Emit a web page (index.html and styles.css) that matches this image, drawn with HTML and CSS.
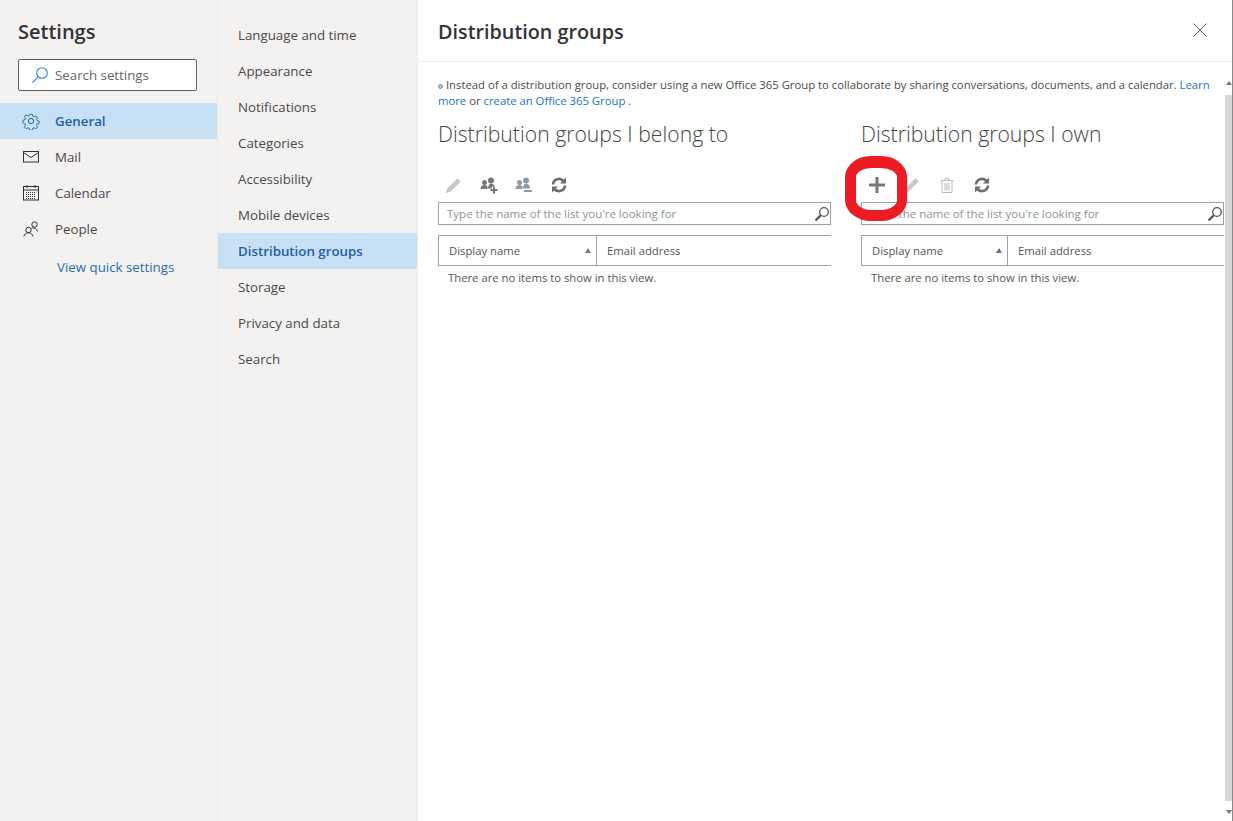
FILE: index.html
```html
<!doctype html>
<html lang="en">
  <head>
    <meta charset="UTF-8" />
    <meta name="viewport" content="width=device-width, initial-scale=1.0" />
    <title>Settings</title>
    <link rel="stylesheet" href="styles.css">
  </head>
  <body>
    <div class="sidebar">
      <div class="sidebar-title">Settings</div>
      <div class="search-settings">
        <svg width="18" height="18" viewBox="0 0 18 18" fill="none" stroke="#2b88d8" stroke-width="1.1"><circle cx="11" cy="7" r="5.3"/><path d="M7.2 10.8 1.5 16.5"/></svg>
        <span>Search settings</span>
      </div>
      <div class="side-item active">
        <svg width="18" height="18" viewBox="0 0 18 18" fill="none" stroke="#1f5fa8" stroke-width="1"><circle cx="9" cy="9" r="2.6"/><path d="M7.6 1.5h2.8l.5 2.2 1.5.7 2-1.1 1.9 2-1.1 1.9.6 1.5 2.2.5v0l0 2.6-2.2.5-.6 1.5 1.1 1.9-1.9 1.9-2-1.1-1.5.7-.5 2.1H7.600l-.5-2.100-1.500-.7-2 1.100-1.900-1.900 1.100-1.900-.6-1.500L0 10.800V8.200l2.200-.5.6-1.500-1.100-1.900 1.900-2 2 1.100 1.500-.7z" transform="translate(.9 .9) scale(.9)"/></svg>
        <span>General</span>
      </div>
      <div class="side-item">
        <svg width="18" height="18" viewBox="0 0 18 18" fill="none" stroke="#333" stroke-width="1"><rect x="1.500" y="3.500" width="15" height="10.500"/><path d="M1.500 4.500 9 9.500l7.500-5"/></svg>
        <span>Mail</span>
      </div>
      <div class="side-item">
        <svg width="18" height="18" viewBox="0 0 18 18" fill="none" stroke="#333" stroke-width="1"><rect x="1.500" y="2.500" width="15" height="13.500"/><path d="M1.500 6h15M5 1v3M13 1v3"/><path d="M4 8.500h10M4 10.500h10M4 12.500h10M4 14.500h10" stroke-dasharray="1 1"/></svg>
        <span>Calendar</span>
      </div>
      <div class="side-item">
        <svg width="18" height="18" viewBox="0 0 18 18" fill="none" stroke="#333" stroke-width="1"><circle cx="6.500" cy="10" r="2.700"/><path d="M2 16.500c0-2 2-3.800 4.500-3.800s4 1.800 4.500 3.800"/><circle cx="12.500" cy="4.500" r="2.700"/><path d="M9.500 8c2.500-.6 5.500.8 6 3.500"/></svg>
        <span>People</span>
      </div>
      <a class="quick-link">View quick settings</a>
    </div>

    <div class="subnav">
      <div class="sub-item">Language and time</div>
      <div class="sub-item">Appearance</div>
      <div class="sub-item">Notifications</div>
      <div class="sub-item">Categories</div>
      <div class="sub-item">Accessibility</div>
      <div class="sub-item">Mobile devices</div>
      <div class="sub-item active">Distribution groups</div>
      <div class="sub-item">Storage</div>
      <div class="sub-item">Privacy and data</div>
      <div class="sub-item">Search</div>
    </div>

    <div class="pane">
      <div class="pane-header">
        <div class="pane-title">Distribution groups</div>
        <svg class="close-icon" width="14" height="14" viewBox="0 0 14 14" fill="none" stroke="#555" stroke-width="1"><path d="M.5.5l13 13M13.500.500l-13 13"/></svg>
      </div>
      <div class="pane-body">
        <p class="notice"><span class="notice-dot"></span> Instead of a distribution group, consider using a new Office 365 Group to collaborate by sharing conversations, documents, and a calendar. <a>Learn</a> <a>more</a> or <a>create an Office 365 Group</a> .</p>
        <div class="columns">
          <section class="group-col">
            <h2>Distribution groups I belong to</h2>
            <div class="toolbar">
              <svg class="tool" width="18" height="18" viewBox="0 0 18 18"><path d="M1 17l1.200-4.500L12.500 2.200l3.300 3.300L5.500 15.800z" fill="#c8c8c8"/></svg>
              <svg class="tool" width="18" height="18" viewBox="0 0 18 18" fill="#777"><circle cx="11" cy="4.500" r="3"/><circle cx="4.500" cy="6.500" r="2.500"/><path d="M.5 13c0-2.500 1.500-4 4-4s3 1 3 2v2zM8 12.500c0-3 1-4.700 3-4.700s3.500 1 3.500 2.700H12v2z"/><path d="M13 10.500h2v2.500h2.500v2H15v2.500h-2V15h-2.500v-2H13z"/></svg>
              <svg class="tool" width="18" height="18" viewBox="0 0 18 18" fill="#8f9ba3"><circle cx="11" cy="4.500" r="3"/><circle cx="4.500" cy="6.500" r="2.500"/><path d="M.5 13c0-2.500 1.500-4 4-4s3 1 3 2v2zM8 12.500c0-3 1-4.700 3-4.700s4 1 4 4.700z"/><path d="M9 14h8v2H9z"/></svg>
              <svg class="tool" width="18" height="18" viewBox="0 0 18 18" fill="none" stroke="#6d6d6d" stroke-width="2.700"><path d="M3 8.500a6 6 0 0 1 10.500-3.500"/><path d="M15 9.500a6 6 0 0 1-10.500 3.500"/><path d="M16 1.500v6h-6zM2 16.500v-6h6z" fill="#6d6d6d" stroke="none"/></svg>
            </div>
            <div class="list-search">
              <span>Type the name of the list you're looking for</span>
              <svg width="16" height="16" viewBox="0 0 16 16" fill="none" stroke="#555"><circle cx="10" cy="6" r="4.300" stroke-width="1.300"/><path d="M6.800 9.200 1.500 14.500" stroke-width="2.200"/></svg>
            </div>
            <div class="list-head">
              <div class="col-name first-wide">Display name<span class="sort-up"></span></div>
              <div class="col-email">Email address</div>
            </div>
            <div class="empty">There are no items to show in this view.</div>
          </section>
          <section class="group-col">
            <h2>Distribution groups I own</h2>
            <div class="toolbar">
              <svg class="tool" width="18" height="18" viewBox="0 0 18 18"><path d="M7.500 1h3v6.500H17v3h-6.500V17h-3v-6.500H1v-3h6.500z" fill="#777"/></svg>
              <svg class="tool" width="18" height="18" viewBox="0 0 18 18"><path d="M1 17l1.200-4.500L12.500 2.200l3.300 3.300L5.500 15.800z" fill="#c8c8c8"/></svg>
              <svg class="tool" width="18" height="18" viewBox="0 0 18 18" fill="none" stroke="#bdbdbd"><path d="M2.500 4.500h13M7 4.500V2.500h4v2M4 4.500V16.500h10V4.500M7 7v7.500M9 7v7.500M11 7v7.500"/></svg>
              <svg class="tool" width="18" height="18" viewBox="0 0 18 18" fill="none" stroke="#6d6d6d" stroke-width="2.700"><path d="M3 8.500a6 6 0 0 1 10.500-3.500"/><path d="M15 9.500a6 6 0 0 1-10.500 3.500"/><path d="M16 1.500v6h-6zM2 16.500v-6h6z" fill="#6d6d6d" stroke="none"/></svg>
            </div>
            <div class="list-search">
              <span>Type the name of the list you're looking for</span>
              <svg width="16" height="16" viewBox="0 0 16 16" fill="none" stroke="#555"><circle cx="10" cy="6" r="4.300" stroke-width="1.300"/><path d="M6.800 9.200 1.500 14.500" stroke-width="2.200"/></svg>
            </div>
            <div class="list-head">
              <div class="col-name">Display name<span class="sort-up purple"></span></div>
              <div class="col-email">Email address</div>
            </div>
            <div class="empty">There are no items to show in this view.</div>
          </section>
        </div>
      </div>
      <div class="scrollbar">
        <span class="arrow-up"></span>
        <div class="scroll-thumb"></div>
        <span class="arrow-down"></span>
      </div>
    </div>
    <div class="edge"></div>
    <div class="red-ring"></div>
  </body>
</html>
```

FILE: styles.css
```css
body {
  font-family: "Open Sans", Arial, sans-serif;
  font-size: 13.3px;
  color: #4a4a4a;
  background-color: #ffffff;
  margin: 0;
  padding: 0;
  display: flex;
  height: 100vh;
  overflow: hidden;
}
svg {
  flex: none;
  display: block;
}
a {
  color: #1a73c7;
}

.sidebar {
  width: 217px;
  flex: none;
  background-color: #f3f2f1;
  border-right: 1px solid #edebe9;
}
.sidebar-title {
  font-size: 20px;
  font-weight: 600;
  color: #333;
  padding: 17px 0 0 18px;
  height: 42px;
  line-height: 30px;
}
.search-settings {
  margin: 0 0 12px 18px;
  width: 165px;
  height: 30px;
  border: 1px solid #605e5c;
  border-radius: 2px;
  background-color: #fff;
  display: flex;
  align-items: center;
  gap: 6px;
  padding-left: 12px;
  color: #666;
}
.side-item {
  height: 36px;
  display: flex;
  align-items: center;
  gap: 15px;
  padding-left: 22px;
  border-radius: 0 2px 2px 0;
}
.side-item.active {
  background-color: #c7e0f4;
  color: #1f5fa8;
  font-weight: 600;
}
.quick-link {
  display: block;
  margin: 11px 0 0 57px;
  color: #2a6cb0;
}

.subnav {
  width: 199px;
  flex: none;
  background-color: #f3f2f1;
  border-right: 1px solid #edebe9;
  padding-top: 17px;
}
.sub-item {
  height: 36px;
  line-height: 36px;
  padding-left: 20px;
  border-radius: 2px;
}
.sub-item.active {
  background-color: #c7e0f4;
  color: #1f5fa8;
  font-weight: 600;
}

.pane {
  flex: 1;
  position: relative;
  min-width: 0;
}
.pane-header {
  height: 62px;
  border-bottom: 1px solid #edebe9;
  display: flex;
  align-items: center;
  justify-content: space-between;
  padding: 1px 26px 0 20px;
  box-sizing: border-box;
}
.pane-title {
  font-size: 19.8px;
  font-weight: 600;
  color: #333;
}
.close-icon {
  margin-top: -3px;
}
.pane-body {
  padding: 15px 0 0 20px;
  width: 786px;
}
.notice {
  margin: 0;
  width: 778px;
  font-size: 11.3px;
  line-height: 16px;
  color: #4a4a4a;
}
.notice-dot {
  display: inline-block;
  width: 3px;
  height: 3px;
  border: 1px solid #6a94b8;
  border-radius: 50%;
  background-color: #a9c4da;
}
.columns {
  display: grid;
  grid-template-columns: 393px 363px;
  gap: 30px;
}
h2 {
  margin: 0;
  font-size: 21.2px;
  font-weight: 300;
  color: #444;
  height: 62px;
  padding-top: 11px;
  line-height: 28px;
  box-sizing: border-box;
}
.toolbar {
  height: 28px;
  padding-bottom: 3px;
  display: flex;
  align-items: center;
  gap: 17px;
  padding-left: 7px;
}
.list-search {
  height: 21px;
  border: 1px solid #98a3a6;
  display: flex;
  align-items: center;
  justify-content: space-between;
  padding: 0 0 0 8px;
  font-size: 11.5px;
  color: #8a9599;
  margin-bottom: 10px;
}
.list-head {
  height: 29px;
  border: 1px solid #98a3a6;
  border-right: none;
  display: flex;
  align-items: center;
  font-size: 11.3px;
  color: #555;
}
.col-name {
  width: 146px;
  box-sizing: border-box;
  height: 100%;
  flex: none;
  padding: 0 5px 0 10px;
  border-right: 1px solid #98a3a6;
  display: flex;
  align-items: center;
  justify-content: space-between;
}
.col-name.first-wide {
  width: 158px;
}
.col-email {
  padding-left: 10px;
}
.sort-up {
  width: 0;
  height: 0;
  border-left: 3.5px solid transparent;
  border-right: 3.5px solid transparent;
  border-bottom: 5px solid #6e7e6e;
}
.sort-up.purple {
  border-bottom-color: #7d5a8c;
}
.empty {
  font-size: 11.3px;
  color: #555;
  padding: 4px 0 0 10px;
}

/* scrollbar of the pane */
.scrollbar {
  position: absolute;
  top: 77px;
  right: 1px;
  width: 7px;
  height: 744px;
  display: flex;
  flex-direction: column;
  align-items: center;
}
.scroll-thumb {
  width: 7px;
  height: 706px;
  margin: 10px 0 9px;
  background-color: #d6d6d6;
}
.arrow-up {
  margin-top: 4px;
  border-left: 3.5px solid transparent;
  border-right: 3.5px solid transparent;
  border-bottom: 4px solid #777;
}
.arrow-down {
  border-left: 3.5px solid transparent;
  border-right: 3.5px solid transparent;
  border-top: 4px solid #777;
}
.edge {
  position: absolute;
  top: 0;
  right: 0;
  width: 1px;
  height: 821px;
  background-color: #8a8a8a;
}
.red-ring {
  position: absolute;
  left: 845px;
  top: 156px;
  width: 41px;
  height: 42px;
  border-style: solid;
  border-color: #ed1c24;
  border-width: 12px 10px 11px 11px;
  border-radius: 26px / 21px;
}
```
